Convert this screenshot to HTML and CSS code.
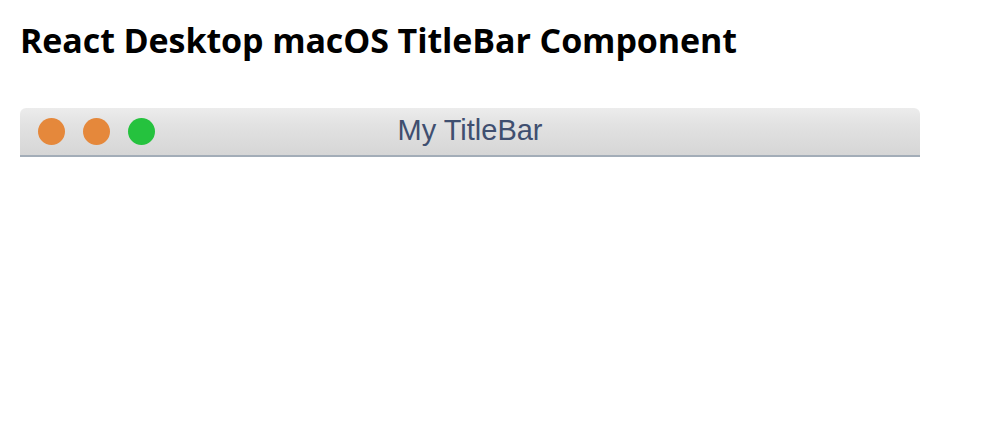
FILE: index.html
```html
<!DOCTYPE html>
<html>
<head>
<meta charset="utf-8">
<link rel="stylesheet" href="styles.css">
</head>
<body>
<div class="page">
  <h1 class="heading">React Desktop macOS TitleBar Component</h1>
  <div class="titlebar">
    <div class="controls">
      <span class="dot dot-close"></span>
      <span class="dot dot-min"></span>
      <span class="dot dot-max"></span>
    </div>
    <div class="title">My TitleBar</div>
  </div>
</div>
</body>
</html>
```
FILE: styles.css
```css
html, body {
  margin: 0;
  padding: 0;
  background: #ffffff;
}
.page {
  padding: 20px 20px 0 20px;
}
.heading {
  margin: 0 0 48px 0;
  font-family: "Open Sans", "Noto Sans", sans-serif;
  font-weight: 700;
  font-size: 34px;
  line-height: 40px;
  letter-spacing: -0.1px;
  color: #000000;
}
.titlebar {
  position: relative;
  width: 900px;
  height: 47px;
  box-sizing: content-box;
  border-radius: 6px 6px 0 0;
  background: linear-gradient(to bottom, #ececec 0%, #e2e2e2 35%, #d6d6d6 100%);
  border-bottom: 2px solid #a3adb8;
  display: flex;
  align-items: center;
}
.controls {
  display: flex;
  gap: 18px;
  padding-left: 18px;
}
.dot {
  display: block;
  width: 27px;
  height: 27px;
  border-radius: 50%;
}
.dot-close, .dot-min { background: #e5883b; }
.dot-max { background: #25c23e; }
.title {
  position: absolute;
  left: 0;
  right: 0;
  top: 0;
  bottom: 0;
  display: flex;
  align-items: center;
  justify-content: center;
  padding-bottom: 3px;
  font-family: "Liberation Sans", Arial, sans-serif;
  font-size: 29px;
  color: #3f4f70;
  pointer-events: none;
}
```
